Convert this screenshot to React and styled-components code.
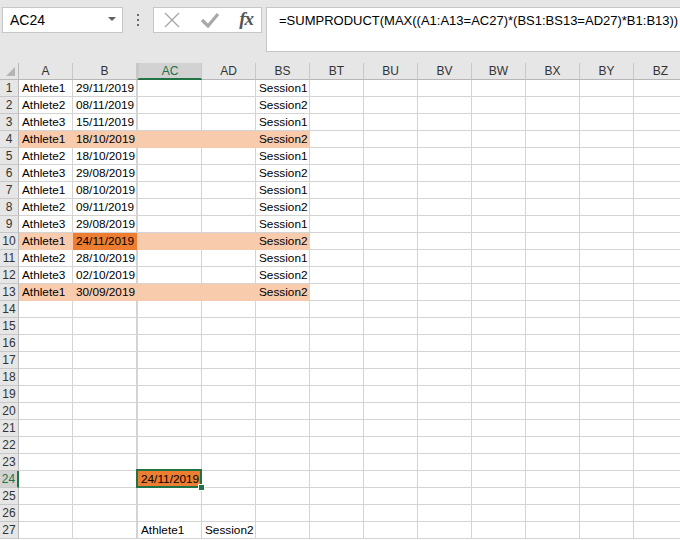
import styled, { createGlobalStyle } from "styled-components";

const GlobalStyle = createGlobalStyle`
  body {
    margin: 0;
    background: #ffffff;
    font-family: "Liberation Sans", Arial, sans-serif;
    overflow: hidden;
  }
`;

const GREEN = "#217346";

//CSS
const Page = styled.div`
  width: 680px;
  height: 540px;
  overflow: hidden;
  background: #ffffff;
`;

const Toolbar = styled.div`
  height: 63px;
  background: #e6e6e6;
  display: flex;
  align-items: flex-start;
  padding: 7px 0 0 2px;
  box-sizing: border-box;
`;

const NameBox = styled.div`
  flex: 0 0 121px;
  height: 26px;
  box-sizing: border-box;
  background: #fff;
  border: 1px solid #c6c6c6;
  display: flex;
  align-items: center;
  justify-content: space-between;
  padding: 0 6px 0 7px;
  font-size: 14px;
  color: #000;
`;

const Arrow = styled.span`
  width: 0;
  height: 0;
  border-left: 4px solid transparent;
  border-right: 4px solid transparent;
  border-top: 4px solid #606060;
  margin-top: -2px;
`;

const Dots = styled.div`
  flex: 0 0 30px;
  height: 26px;
  display: flex;
  flex-direction: column;
  align-items: center;
  justify-content: center;
  gap: 3px;
  span {
    width: 2px;
    height: 2px;
    background: #6a6a6a;
  }
`;

const FuncBox = styled.div`
  flex: 0 0 109px;
  height: 26px;
  box-sizing: border-box;
  background: #fff;
  border: 1px solid #c6c6c6;
  display: flex;
  align-items: center;
  padding: 0 8px 0 9px;
  justify-content: space-between;
`;

const Fx = styled.span`
  font-family: "Liberation Serif", "Times New Roman", serif;
  font-style: italic;
  font-weight: bold;
  font-size: 19px;
  color: #555;
  margin-top: -3px;
  letter-spacing: -1px;
`;

const FormulaBox = styled.div`
  flex: 1;
  min-width: 0;
  overflow: hidden;
  height: 45px;
  margin-left: 4px;
  box-sizing: border-box;
  background: #fff;
  border: 1px solid #c6c6c6;
  border-right: none;
  padding: 4px 0 0 12px;
  font-size: 13px;
  line-height: 18px;
  color: #000;
  white-space: nowrap;
`;

const Sheet = styled.div`
  display: grid;
  grid-template-columns: 19px 54px 64px 65px 54px 54px repeat(7, 54px);
  grid-auto-rows: 17px;
`;

const Corner = styled.div`
  background: #e6e6e6;
  border-right: 1px solid #b8b8b8;
  border-bottom: 1px solid #b8b8b8;
  position: relative;
  &::after {
    content: "";
    position: absolute;
    right: 3px;
    bottom: 3px;
    border-left: 9px solid transparent;
    border-bottom: 9px solid #b4b4b4;
  }
`;

const ColHeader = styled.div`
  background: ${(p) => (p.$active ? "#d2d2d2" : "#e6e6e6")};
  color: ${(p) => (p.$active ? GREEN : "#333")};
  font-size: 12px;
  text-align: center;
  line-height: 16px;
  box-sizing: border-box;
  border-right: 1px solid #c8c8c8;
  border-left: ${(p) => (p.$gap ? "2px solid #c8c8c8" : "none")};
  border-bottom: ${(p) => (p.$active ? `2px solid ${GREEN}` : "1px solid #b8b8b8")};
`;

const RowHeader = styled.div`
  background: ${(p) => (p.$active ? "#d2d2d2" : "#e6e6e6")};
  color: ${(p) => (p.$active ? GREEN : "#333")};
  font-size: 12px;
  text-align: center;
  line-height: 16px;
  box-sizing: border-box;
  border-bottom: 1px solid #c8c8c8;
  border-right: ${(p) => (p.$active ? `2px solid ${GREEN}` : "1px solid #b8b8b8")};
`;

const fills = {
  light: "#f8cbad",
  dark: "#ed7d31",
};

const Cell = styled.div`
  position: relative;
  box-sizing: border-box;
  font-size: 11.8px;
  line-height: 16px;
  color: #000;
  padding: 0 2px 0 3px;
  white-space: nowrap;
  text-align: ${(p) => (p.$right ? "right" : "left")};
  background: ${(p) => (p.$fill ? fills[p.$fill] : "#fff")};
  border-right: 1px solid ${(p) => (p.$fill ? "transparent" : "#d4d4d4")};
  border-bottom: 1px solid ${(p) => (p.$fill ? "transparent" : "#d4d4d4")};
  border-left: ${(p) => (p.$gap ? "1px solid #d4d4d4" : "none")};

  ${(p) =>
    p.$selected &&
    `
    &::after {
      content: "";
      position: absolute;
      left: -2px;
      top: -2px;
      right: -1px;
      bottom: -1px;
      border: 2px solid ${GREEN};
    }
    &::before {
      content: "";
      position: absolute;
      right: -4px;
      bottom: -4px;
      width: 5px;
      height: 5px;
      background: ${GREEN};
      border: 1px solid #fff;
      z-index: 2;
    }
  `}
`;

const columns = ["A", "B", "AC", "AD", "BS", "BT", "BU", "BV", "BW", "BX", "BY", "BZ"];

const data = [
  ["Athlete1", "29/11/2019", "Session1"],
  ["Athlete2", "08/11/2019", "Session2"],
  ["Athlete3", "15/11/2019", "Session1"],
  ["Athlete1", "18/10/2019", "Session2", true],
  ["Athlete2", "18/10/2019", "Session1"],
  ["Athlete3", "29/08/2019", "Session2"],
  ["Athlete1", "08/10/2019", "Session1"],
  ["Athlete2", "09/11/2019", "Session2"],
  ["Athlete3", "29/08/2019", "Session1"],
  ["Athlete1", "24/11/2019", "Session2", true, true],
  ["Athlete2", "28/10/2019", "Session1"],
  ["Athlete3", "02/10/2019", "Session2"],
  ["Athlete1", "30/09/2019", "Session2", true],
];

function cellFor(row, col) {
  const d = data[row - 1];
  if (d) {
    const hl = d[3];
    const fill = hl && col <= 4 ? "light" : null;
    if (col === 0) return { text: d[0], fill };
    if (col === 1) return { text: d[1], right: true, fill: d[4] ? "dark" : fill };
    if (col === 4) return { text: d[2], fill };
    return { fill };
  }
  if (row === 24 && col === 2) return { text: "24/11/2019", fill: "dark", right: true, selected: true };
  if (row === 27 && col === 2) return { text: "Athlete1" };
  if (row === 27 && col === 3) return { text: "Session2" };
  return {};
}

const rows = Array.from({ length: 27 }, (_, i) => i + 1);

const App = () => {
  return (
    <Page>
      <GlobalStyle />
      <Toolbar>
        <NameBox>
          AC24
          <Arrow />
        </NameBox>
        <Dots>
          <span />
          <span />
          <span />
        </Dots>
        <FuncBox>
          <svg width="18" height="18" viewBox="0 0 18 18">
            <path d="M2 2 L16 16 M16 2 L2 16" stroke="#a8a8a8" strokeWidth="1.4" fill="none" />
          </svg>
          <svg width="20" height="16" viewBox="0 0 20 16">
            <path d="M2 8 L8 14 L18 2" stroke="#a8a8a8" strokeWidth="3.2" fill="none" />
          </svg>
          <Fx>fx</Fx>
        </FuncBox>
        <FormulaBox>=SUMPRODUCT(MAX((A1:A13=AC27)*(BS1:BS13=AD27)*B1:B13))</FormulaBox>
      </Toolbar>
      <Sheet>
        <Corner />
        {columns.map((c) => (
          <ColHeader key={c} $active={c === "AC"} $gap={c === "AC"}>
            {c}
          </ColHeader>
        ))}
        {rows.map((r) => [
          <RowHeader key={`h${r}`} $active={r === 24}>
            {r}
          </RowHeader>,
          ...columns.map((c, ci) => {
            const cell = cellFor(r, ci);
            return (
              <Cell
                key={`${r}-${c}`}
                $fill={cell.fill}
                $right={cell.right}
                $selected={cell.selected}
                $gap={ci === 2}
              >
                {cell.text}
              </Cell>
            );
          }),
        ])}
      </Sheet>
    </Page>
  );
};

export default App;
